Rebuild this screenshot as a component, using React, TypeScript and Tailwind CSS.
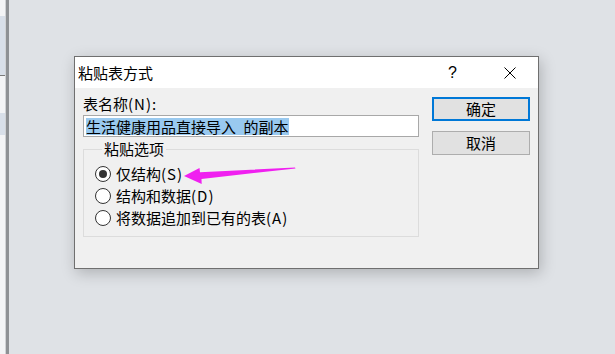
import React from 'react';

const options = [
  { label: '仅结构', key: 'S', checked: true },
  { label: '结构和数据', key: 'D', checked: false },
  { label: '将数据追加到已有的表', key: 'A', checked: false },
];

function Radio({ checked }: { checked: boolean }) {
  return (
    <span className="flex h-[16px] w-[16px] shrink-0 items-center justify-center rounded-full border border-[#333333] bg-white">
      {checked && <span className="h-[8px] w-[8px] rounded-full bg-[#333333]" />}
    </span>
  );
}

function LeftEdge() {
  return (
    <div className="flex h-full shrink-0">
      <div className="flex w-[5px] flex-col bg-[#f3f4f6]">
        <div className="mt-[16px] h-[59px] bg-[#d8dfe9]" />
        <div className="h-px bg-[#7a7a7a]" />
        <div className="mt-[37px] h-[22px] bg-[#d8dfe9]" />
      </div>
      <div className="w-px bg-[#d0d2d5]" />
      <div className="w-[3px] bg-[#8e9195]" />
    </div>
  );
}

function PasteDialog() {
  return (
    <div className="flex h-[213px] w-[465px] flex-col border border-[#6f6f6f] bg-[#f0f0f0] shadow-[2px_4px_14px_rgba(0,0,0,0.22)]">
      <div className="flex h-[31px] items-center bg-white">
        <span className="flex-1 pl-[3px] leading-[18px]">粘贴表方式</span>
        <span className="flex h-full w-[57px] items-center justify-center font-['Liberation_Sans',sans-serif] text-[16px]">
          ?
        </span>
        <span className="flex h-full w-[57px] items-center justify-center">
          <svg width="12" height="12" viewBox="0 0 12 12" fill="none" stroke="#000" strokeWidth="1">
            <path d="M0.5 0.5 L11.5 11.5 M11.5 0.5 L0.5 11.5" />
          </svg>
        </span>
      </div>

      <div className="flex px-[8px]">
        <div className="flex w-[336px] flex-col">
          <div className="mt-[7px] h-[18px] leading-[18px]">
            表名称<span className="tracking-[1px]">(N):</span>
          </div>
          <div className="mt-[2px] flex h-[22px] items-center border border-[#a8a8a8] bg-white pl-[2px]">
            <span className="h-[17px] bg-[#99c9ef] leading-[17px]">生活健康用品直接导入{'\u2002'}的副本</span>
          </div>
          <fieldset className="mt-[3px] border border-[#dcdcdc] pb-[7px] pl-[11px] pt-[5px]">
            <legend className="ml-[7px] px-[2px] leading-[18px]">粘贴选项</legend>
            {options.map((o) => (
              <div key={o.key} className="flex h-[22px] items-center gap-[5px] leading-[18px]">
                <Radio checked={o.checked} />
                <span>
                  {o.label}
                  <span className="tracking-[1px]">({o.key})</span>
                </span>
              </div>
            ))}
          </fieldset>
        </div>

        <div className="ml-[13px] flex w-[98px] flex-col pt-[9px]">
          <button className="flex h-[24px] items-center justify-center border-2 border-[#0078d7] bg-[#e1e1e1] leading-[18px]">
            确定
          </button>
          <button className="mt-[10px] flex h-[24px] items-center justify-center border border-[#adadad] bg-[#e1e1e1] leading-[18px]">
            取消
          </button>
        </div>
      </div>
    </div>
  );
}

function Arrow() {
  return (
    <svg className="pointer-events-none absolute left-0 top-0" width="615" height="354" viewBox="0 0 615 354">
      <path
        d="M184 176 L199.5 168 L200 172.3 L295 167.4 L295.5 168.4 L201.5 179 L201.7 184 Z"
        fill="#f020f0"
      />
    </svg>
  );
}

export default function App() {
  return (
    <div className="relative flex h-[354px] w-[615px] overflow-hidden bg-[#dfe2e6] font-['Noto_Sans_CJK_SC','Noto_Sans',sans-serif] text-[15px] text-black">
      <LeftEdge />
      <div className="flex-1 pl-[65px] pt-[56px]">
        <PasteDialog />
      </div>
      <Arrow />
    </div>
  );
}
